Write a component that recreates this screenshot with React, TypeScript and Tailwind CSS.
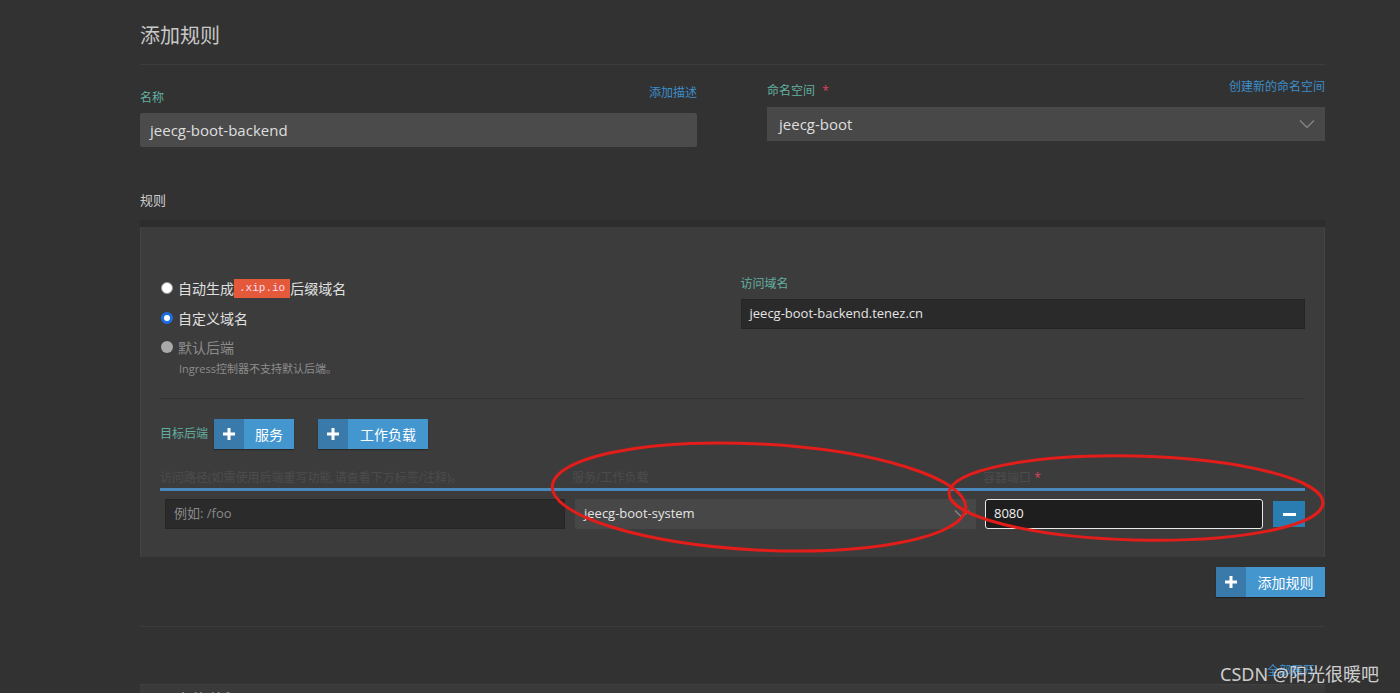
import React from "react";

const Plus = ({ size = 12 }: { size?: number }) => (
  <svg width={size} height={size} viewBox="0 0 12 12">
    <rect x="4.5" y="0" width="3" height="12" fill="#fff" />
    <rect x="0" y="4.5" width="12" height="3" fill="#fff" />
  </svg>
);

const Chevron = () => (
  <svg width="16" height="10" viewBox="0 0 16 10" fill="none">
    <path d="M1 1.5 L8 8.5 L15 1.5" stroke="#8a8a8a" strokeWidth="1.2" />
  </svg>
);

const SplitButton = ({ label, rightW }: { label: string; rightW: string }) => (
  <div className="flex h-[30px] shadow-[0_1px_1px_rgba(0,0,0,0.3)]">
    <div className="w-[30px] bg-[#3a7aab] flex items-center justify-center">
      <Plus />
    </div>
    <div className={`${rightW} bg-[#4496cf] flex items-center justify-center text-[14px] text-white`}>
      {label}
    </div>
  </div>
);

export default function App() {
  return (
    <div className="relative h-[693px] overflow-hidden bg-[#323232] font-['Open_Sans','Noto_Sans_CJK_SC',sans-serif]">
      <div className="ml-[140px] w-[1185px]">
        {/* Title */}
        <div className="h-[65px] border-b border-[#3d3d3d] pt-[22px]">
          <div className="text-[20px] leading-[28px] text-[#c9c9c9]">添加规则</div>
        </div>

        {/* name / namespace */}
        <div className="flex items-start gap-[70px]">
          <div className="w-[557px] mt-[25px]">
            <div className="flex justify-between text-[12px] leading-[16px]">
              <span className="text-[#62b0a0]">名称</span>
              <span className="text-[#3d8ecb] -mt-[5px]">添加描述</span>
            </div>
            <div className="mt-[7px] h-[34px] bg-[#4b4b4b] rounded-[2px] flex items-center px-[10px] text-[15px] text-[#dedede]">
              jeecg-boot-backend
            </div>
          </div>
          <div className="w-[558px] mt-[18px]">
            <div className="flex justify-between text-[12px] leading-[16px]">
              <span className="text-[#62b0a0]">
                命名空间 <span className="text-[#e0405e] ml-[4px]">*</span>
              </span>
              <span className="text-[#3d8ecb] -mt-[4px]">创建新的命名空间</span>
            </div>
            <div className="mt-[8px] h-[34px] bg-[#484848] flex items-center justify-between pl-[12px] pr-[10px] text-[15px] text-[#dedede]">
              <span>jeecg-boot</span>
              <Chevron />
            </div>
          </div>
        </div>

        {/* rules */}
        <div className="mt-[45px] text-[13px] leading-[16px] text-[#cfcfcf]">规则</div>
        <div className="mt-[12px] h-[7px] bg-[#2d2d2d]" />
        <div className="bg-[#3c3c3c] border-x border-[#444] px-[19px] pt-[46px] pb-[28px]">
          <div className="grid grid-cols-2 gap-[16px]">
            <div>
              <div className="h-[30px] flex items-center text-[14px] text-[#e0e0e0]">
                <span className="w-[12px] h-[12px] rounded-full bg-white border border-[#999] mr-[5px] ml-[1px]" />
                自动生成
                <span className="px-[5px] h-[19px] leading-[19px] bg-[#e5593b] text-[#fde] text-[11px] font-['Liberation_Mono',monospace]">
                  .xip.io
                </span>
                后缀域名
              </div>
              <div className="h-[30px] flex items-center text-[14px] text-[#e0e0e0]">
                <span className="w-[12px] h-[12px] rounded-full bg-white border-[3px] border-[#1a6fe0] mr-[5px] ml-[1px]" />
                自定义域名
              </div>
              <div className="h-[28px] flex items-center text-[14px] text-[#8c8c8c]">
                <span className="w-[12px] h-[12px] rounded-full bg-[#a9a9a9] mr-[5px] ml-[1px]" />
                默认后端
              </div>
              <div className="pl-[19px] text-[11px] leading-[16px] text-[#8c8c8c]">
                Ingress控制器不支持默认后端。
              </div>
            </div>
            <div className="mt-[3px]">
              <div className="text-[12px] leading-[16px] text-[#62b0a0]">访问域名</div>
              <div className="mt-[7px] h-[30px] bg-[#2a2a2a] border border-[#242424] flex items-center px-[8px] text-[13px] text-[#e4e4e4]">
                jeecg-boot-backend.tenez.cn
              </div>
            </div>
          </div>

          <div className="mt-[21px] border-t border-[#333]" />

          <div className="mt-[20px] flex items-center h-[30px]">
            <span className="text-[12px] text-[#62b0a0] w-[54px]">目标后端</span>
            <SplitButton label="服务" rightW="w-[50px]" />
            <div className="w-[24px]" />
            <SplitButton label="工作负载" rightW="w-[80px]" />
          </div>

          <div className="mt-[21px] flex text-[12px] leading-[16px] text-[#4c4c4c]">
            <div className="w-[410px]">访问路径(如需使用后端重写功能,请查看下方标签/注释)。</div>
            <div className="w-[410px] pl-[2px]">服务/工作负载</div>
            <div className="pl-[3px]">
              容器端口 <span className="text-[#e0405e]">*</span>
            </div>
          </div>
          <div className="mt-[2px] h-[3px] bg-[#4a87bd]" />

          <div className="mt-[8px] flex h-[30px]">
            <div className="w-[410px] px-[5px]">
              <div className="h-full bg-[#2b2b2b] border border-[#262626] flex items-center px-[8px] text-[13px] text-[#8a8a8a]">
                例如: /foo
              </div>
            </div>
            <div className="w-[410px] pl-[5px] pr-[4px]">
              <div className="h-full bg-[#474747] flex items-center justify-between pl-[9px] pr-[6px] text-[13px] text-[#e4e4e4]">
                <span>jeecg-boot-system</span>
                <Chevron />
              </div>
            </div>
            <div className="pl-[5px] flex items-center">
              <div className="w-[278px] h-[30px] bg-[#1e1e1e] border border-[#e8e8e8] rounded-[3px] flex items-center px-[8px] text-[13px] text-[#f0f0f0]">
                8080
              </div>
              <div className="ml-[10px] w-[32px] h-[26px] bg-[#2a7db1] flex items-center justify-center">
                <div className="w-[13px] h-[3px] bg-white" />
              </div>
            </div>
          </div>
        </div>

        <div className="mt-[10px] flex justify-end">
          <SplitButton label="添加规则" rightW="w-[79px]" />
        </div>

        <div className="mt-[29px] border-t border-[#3b3b3b]" />

        <div className="mt-[36px] flex justify-end pr-[10px] text-[12px] leading-[16px] text-[#3d8ecb]">全部展开</div>
        <div className="mt-[5px] h-[30px] bg-[#3a3a3a] border-t border-[#404040] pl-[40px] pt-[4px] text-[13px] text-[#bbb]">
          标签/注释
        </div>
      </div>

      {/* annotations */}
      <svg className="absolute inset-0 pointer-events-none" width="1400" height="693">
        <ellipse cx="759" cy="497" rx="207" ry="53" fill="none" stroke="#e21d1a" strokeWidth="3" transform="rotate(3 759 497)" />
        <ellipse cx="1136" cy="498" rx="187" ry="42" fill="none" stroke="#e21d1a" strokeWidth="3" transform="rotate(1.5 1136 498)" />
      </svg>

      <div className="absolute left-[1220px] top-[661px] text-[18px] leading-[26px] text-[#e2e2e2]/90 font-['Noto_Sans','Noto_Sans_CJK_SC',sans-serif]">
        CSDN @阳光很暖吧
      </div>
    </div>
  );
}
